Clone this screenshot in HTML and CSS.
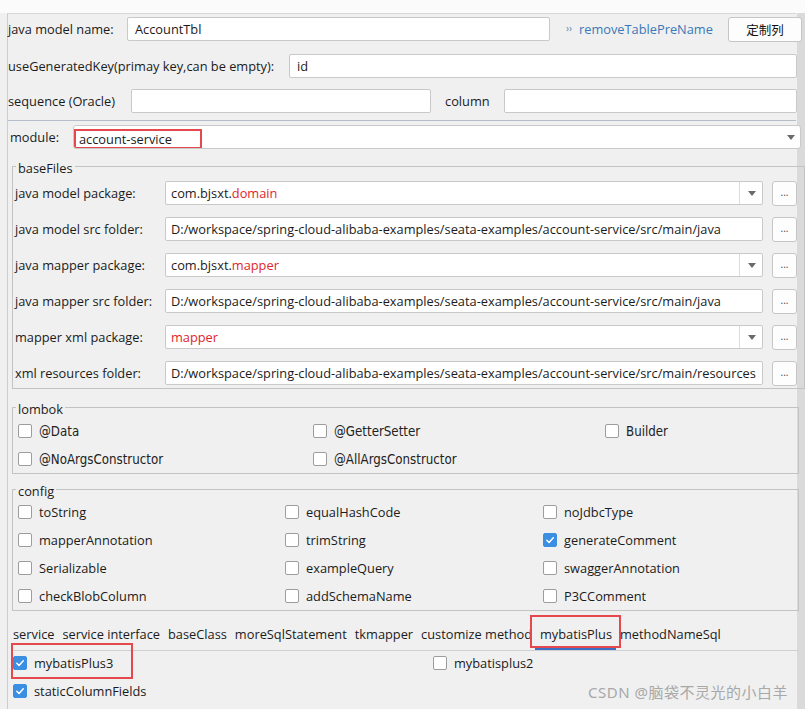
FILE: index.html
```html
<!DOCTYPE html>
<html>
<head>
<meta charset="utf-8">
<link rel="stylesheet" href="styles.css">
</head>
<body>
<div class="top-strip"></div>
<div class="window">
  <div class="main">
    <div class="row row1">
      <span class="lbl w-name">java model name:</span>
      <div class="input in-name">AccountTbl</div>
      <a class="link"><span class="chev">››</span>removeTablePreName</a>
      <div class="btn btn-cols">定制列</div>
    </div>
    <div class="row row2">
      <span class="lbl w-key">useGeneratedKey(primay key,can be empty):</span>
      <div class="input in-key">id</div>
    </div>
    <div class="row row3">
      <span class="lbl w-seq">sequence (Oracle)</span>
      <div class="input in-seq"></div>
      <span class="lbl w-col">column</span>
      <div class="input in-col"></div>
    </div>

    <div class="module">
      <div class="row module-row">
        <span class="lbl w-mod">module:</span>
        <div class="input select in-mod">
          <span class="mark mark-mod">account-service</span>
          <span class="arrow"></span>
        </div>
      </div>

      <fieldset class="group base">
        <legend>baseFiles</legend>
        <div class="frows">
          <div class="frow">
            <span class="lbl w-base">java model package:</span>
            <div class="input select in-base">com.bjsxt.<span class="red">domain</span><span class="sep"></span><span class="arrow"></span></div>
            <div class="btn dots">...</div>
          </div>
          <div class="frow">
            <span class="lbl w-base">java model src folder:</span>
            <div class="input in-base">D:/workspace/spring-cloud-alibaba-examples/seata-examples/account-service/src/main/java</div>
            <div class="btn dots">...</div>
          </div>
          <div class="frow">
            <span class="lbl w-base">java mapper package:</span>
            <div class="input select in-base">com.bjsxt.<span class="red">mapper</span><span class="sep"></span><span class="arrow"></span></div>
            <div class="btn dots">...</div>
          </div>
          <div class="frow">
            <span class="lbl w-base">java mapper src folder:</span>
            <div class="input in-base">D:/workspace/spring-cloud-alibaba-examples/seata-examples/account-service/src/main/java</div>
            <div class="btn dots">...</div>
          </div>
          <div class="frow">
            <span class="lbl w-base">mapper xml package:</span>
            <div class="input select in-base"><span class="red">mapper</span><span class="sep"></span><span class="arrow"></span></div>
            <div class="btn dots">...</div>
          </div>
          <div class="frow">
            <span class="lbl w-base">xml resources folder:</span>
            <div class="input in-base">D:/workspace/spring-cloud-alibaba-examples/seata-examples/account-service/src/main/resources</div>
            <div class="btn dots">...</div>
          </div>
        </div>
      </fieldset>

      <fieldset class="group lombok">
        <legend>lombok</legend>
        <div class="grid lombok-grid">
          <label class="cb"><span class="box"></span>@Data</label>
          <label class="cb"><span class="box"></span>@GetterSetter</label>
          <label class="cb"><span class="box"></span>Builder</label>
          <label class="cb"><span class="box"></span>@NoArgsConstructor</label>
          <label class="cb"><span class="box"></span>@AllArgsConstructor</label>
        </div>
      </fieldset>

      <fieldset class="group config">
        <legend>config</legend>
        <div class="grid config-grid">
          <label class="cb"><span class="box"></span>toString</label>
          <label class="cb"><span class="box"></span>equalHashCode</label>
          <label class="cb"><span class="box"></span>noJdbcType</label>
          <label class="cb"><span class="box"></span>mapperAnnotation</label>
          <label class="cb"><span class="box"></span>trimString</label>
          <label class="cb"><span class="box on"><svg viewBox="0 0 14 14"><path d="M3.3 7.2 L5.9 9.8 L10.8 4.4" /></svg></span>generateComment</label>
          <label class="cb"><span class="box"></span>Serializable</label>
          <label class="cb"><span class="box"></span>exampleQuery</label>
          <label class="cb"><span class="box"></span>swaggerAnnotation</label>
          <label class="cb"><span class="box"></span>checkBlobColumn</label>
          <label class="cb"><span class="box"></span>addSchemaName</label>
          <label class="cb"><span class="box"></span>P3CComment</label>
        </div>
      </fieldset>

      <div class="tabs">
        <span class="tab">service</span>
        <span class="tab">service interface</span>
        <span class="tab">baseClass</span>
        <span class="tab">moreSqlStatement</span>
        <span class="tab">tkmapper</span>
        <span class="tab">customize method</span>
        <span class="tab active">mybatisPlus<span class="mark mark-tab"></span></span>
        <span class="tab">methodNameSql</span>
      </div>
      <div class="tab-body">
        <div class="brow brow1">
          <label class="cb cb-mp3"><span class="box on"><svg viewBox="0 0 14 14"><path d="M3.3 7.2 L5.9 9.8 L10.8 4.4" /></svg></span>mybatisPlus3<span class="mark mark-mp3"></span></label>
          <label class="cb"><span class="box"></span>mybatisplus2</label>
        </div>
        <div class="brow brow2">
          <label class="cb"><span class="box on"><svg viewBox="0 0 14 14"><path d="M3.3 7.2 L5.9 9.8 L10.8 4.4" /></svg></span>staticColumnFields</label>
          <span class="watermark">CSDN @脑袋不灵光的小白羊</span>
        </div>
      </div>
    </div>
  </div>
</div>
</body>
</html>
```

FILE: styles.css
```css
html, body {
  margin: 0;
  padding: 0;
}
body {
  width: 805px;
  height: 709px;
  overflow: hidden;
  background: #f0f0f0;
  font-family: "Open Sans", "Noto Sans", "Noto Sans CJK SC", sans-serif;
  font-size: 12.8px;
  color: #1b1b1b;
}
.top-strip {
  height: 13px;
  background: #fbfbfb;
}
.window {
  height: 696px;
  background: linear-gradient(to left, #dadada 8px, #f0f0f0 8px);
  padding-left: 7px;
}
.main {
  width: 789px;
  height: 696px;
  box-sizing: border-box;
  border-left: 1px solid #cdcdcd;
  border-top: 1px solid #d6d6d6;
  padding-top: 3px;
}
.row {
  display: flex;
  align-items: center;
  height: 24px;
}
.row2 { margin-top: 13px; }
.row3 { margin-top: 11px; }
.lbl {
  white-space: nowrap;
  flex: none;
}
.input {
  box-sizing: border-box;
  height: 24px;
  background: #fff;
  border: 1px solid #c9c9c9;
  border-radius: 2px;
  padding-left: 6px;
  display: flex;
  align-items: center;
  white-space: nowrap;
  overflow: hidden;
  flex: none;
  position: relative;
}
.w-name { width: 119px; }
.in-name { width: 423px; padding-left: 7px; }
.link {
  margin-left: 16px;
  width: 163px;
  color: #3a78b8;
  white-space: nowrap;
}
.chev {
  font-size: 10px;
  color: #5d87b4;
  margin-right: 7px;
  position: relative;
  top: -2px;
}
.btn {
  box-sizing: border-box;
  background: #fdfdfd;
  border: 1px solid #c6c6c6;
  border-radius: 3px;
  display: flex;
  align-items: center;
  justify-content: center;
  flex: none;
}
.btn-cols {
  width: 74px;
  height: 25px;
  margin-right: -6px;
  font-family: "Noto Sans CJK SC", sans-serif;
  font-size: 12.5px;
  color: #111;
}
.w-key { width: 281px; }
.in-key { width: 508px; padding-left: 7px; }
.w-seq { width: 123px; }
.in-seq { width: 300px; }
.w-col { width: 59px; margin-left: 14px; }
.in-col { width: 293px; }

.module {
  margin-top: 7px;
  border-top: 1px solid #b4bfca;
}
.module-row {
  margin-top: 4px;
  padding-left: 2px;
}
.w-mod { width: 63px; }
.in-mod {
  width: 728px;
  margin-right: -4px;
  border-radius: 3px;
  padding-left: 0;
}
.mark {
  border: 2px solid #e5484d;
  box-sizing: border-box;
}
.mark-mod {
  display: block;
  width: 128px;
  height: 20px;
  line-height: 16px;
  margin-top: 3px;
  padding-left: 3px;
}
.arrow {
  position: absolute;
  right: 6px;
  top: 9px;
  width: 0;
  height: 0;
  border-left: 4.5px solid transparent;
  border-right: 4.5px solid transparent;
  border-top: 5px solid #6b6b6b;
}
.in-mod .arrow { right: 5px; }
.sep {
  position: absolute;
  right: 22px;
  top: 0;
  bottom: 0;
  border-left: 1px solid #dcdcdc;
}

.group {
  margin: 0 0 0 4px;
  padding: 0;
  border: 1px solid #c3c3c3;
  min-width: 0;
  box-sizing: border-box;
}
.group legend {
  margin-left: 3px;
  padding: 3px 2px 0 2px;
  line-height: 18px;
  height: 21px;
  box-sizing: border-box;
}
.base {
  margin-top: 7px;
  width: 793px;
}
.frows {
  padding: 4px 0 3px 2px;
}
.frow {
  display: flex;
  align-items: center;
  height: 24px;
}
.frow + .frow { margin-top: 12px; }
.w-base { width: 150px; }
.in-base { width: 598px; padding-left: 5px; }
.dots {
  width: 25px;
  height: 25px;
  margin-left: 9px;
  font-size: 10px;
  color: #444;
  padding-bottom: 2px;
}
.red { color: #e0262b; }

.lombok {
  margin-top: 8px;
  width: 787px;
}
.grid {
  display: grid;
  padding-left: 5px;
}
.lombok-grid {
  grid-template-columns: 295px 292px 1fr;
  grid-auto-rows: 28px;
  margin-top: -1px;
}
.lombok .cb {
  font-family: "DejaVu Sans Condensed", "DejaVu Sans", sans-serif;
  font-stretch: condensed;
  font-size: 13.2px;
  color: #222;
}
.cb {
  display: flex;
  align-items: center;
  white-space: nowrap;
  position: relative;
}
.box {
  box-sizing: border-box;
  width: 14px;
  height: 14px;
  background: #fff;
  border: 1px solid #9d9d9d;
  border-radius: 2px;
  margin-right: 7px;
  flex: none;
  display: flex;
}
.box.on {
  background: #3b8fe3;
  border-color: #3b8fe3;
}
.box svg {
  width: 12px;
  height: 12px;
}
.box svg path {
  fill: none;
  stroke: #fff;
  stroke-width: 1.7;
  stroke-linecap: round;
  stroke-linejoin: round;
}

.config {
  margin-top: 5px;
  width: 787px;
}
.config-grid {
  grid-template-columns: 267px 258px 1fr;
  grid-auto-rows: 28px;
  margin-top: -2px;
}

.tabs {
  display: flex;
  margin-top: 14px;
  margin-left: 3px;
  border-bottom: 1px solid #d0d0d0;
  width: 786px;
  padding-left: 2px;
}
.tab {
  line-height: 18px;
  padding: 0 0 7px 0;
  margin-right: 8px;
  position: relative;
  white-space: nowrap;
}
.tab.active {
  border-bottom: 2px solid #3a6fc4;
  padding: 0 4px 5px 5px;
  margin-left: -5px;
  margin-right: 4px;
}
.mark-tab {
  position: absolute;
  left: -5px;
  right: -5px;
  top: -10px;
  bottom: 0;
}
.tab-body {
  padding-left: 5px;
}
.brow {
  display: flex;
  align-items: center;
  height: 24px;
}
.brow2 { margin-top: 4px; }
.cb-mp3 { width: 420px; }
.mark-mp3 {
  position: absolute;
  left: -2px;
  top: -11px;
  width: 122px;
  height: 36px;
}
.watermark {
  margin-left: auto;
  margin-right: 8px;
  font-family: "Noto Sans", "Noto Sans CJK SC", sans-serif;
  font-size: 15px;
  color: #a8a8a8;
  letter-spacing: 0.5px;
}
```
